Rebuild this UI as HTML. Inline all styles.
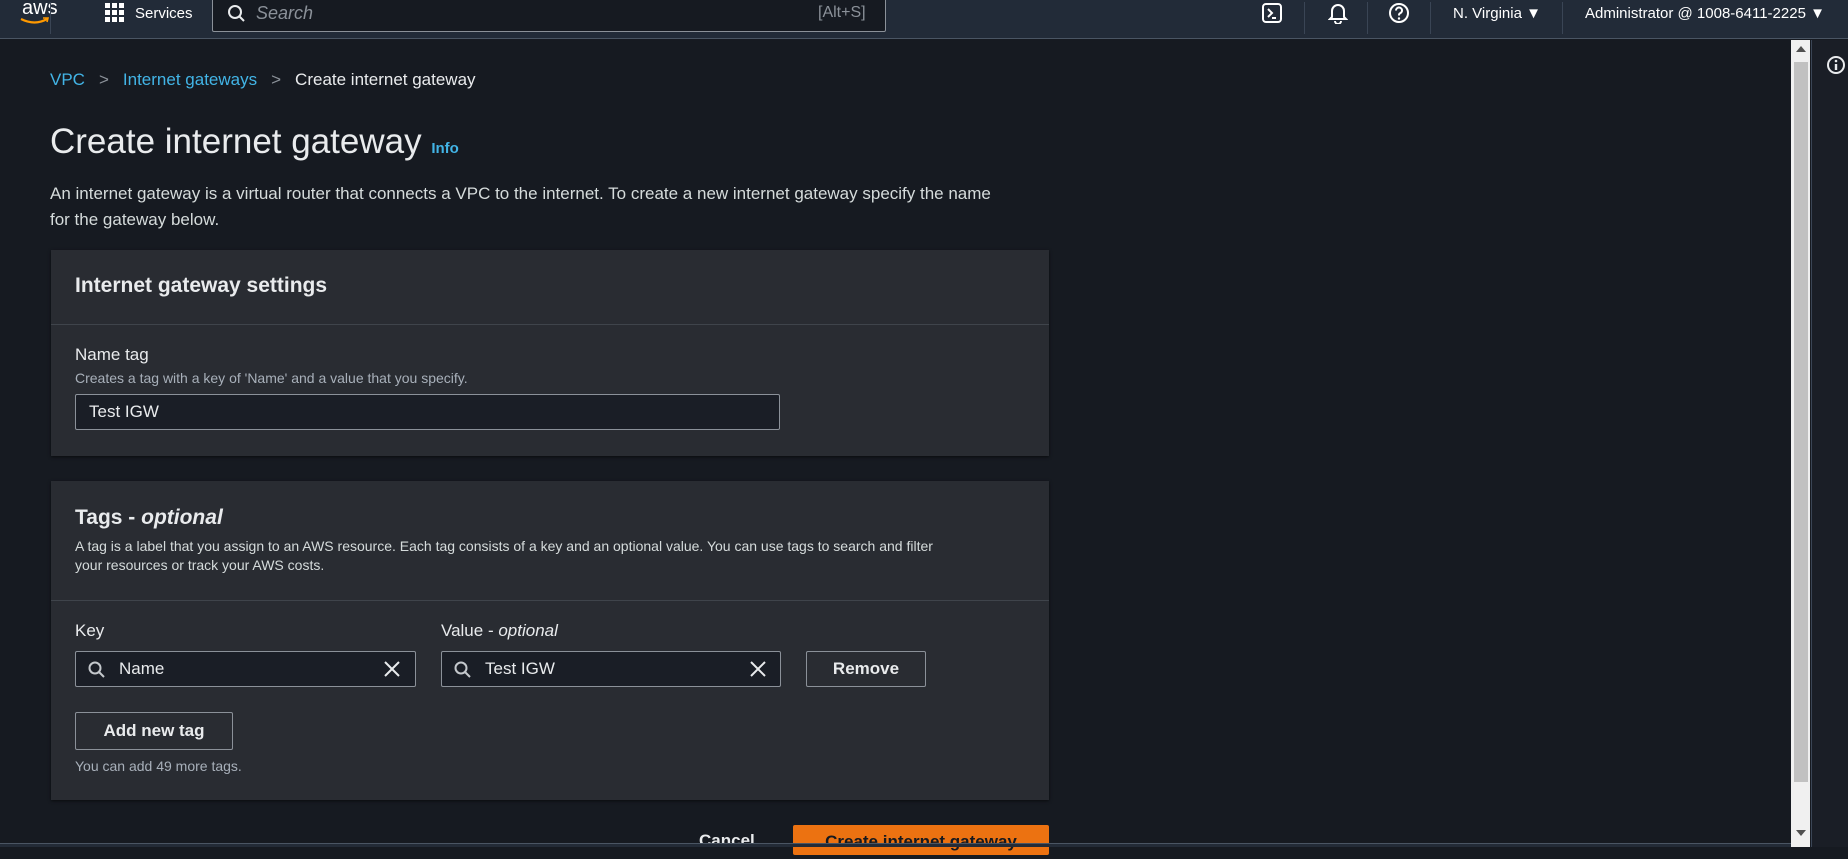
<!DOCTYPE html>
<html><head><meta charset="utf-8"><style>
*{box-sizing:border-box;margin:0;padding:0}
body{width:1848px;height:847px;overflow:hidden;background:#161a21;font-family:"Liberation Sans",sans-serif;color:#d5dbdb;position:relative}
.abs{position:absolute}
.hdr{left:0;top:0;width:1848px;height:39px;background:#222b38;border-bottom:1px solid #4a5563}
.hdr .t{color:#fff;font-size:15px;white-space:nowrap}
.sep{width:1px;height:32px;top:2px;background:#3a4555}
.panel{background:#292c32;left:51px;width:998px;box-shadow:0 1px 3px rgba(0,0,0,.6)}
.line{left:0;width:100%;height:1px;background:#3f444b}
.input{background:#1a1e26;border:1px solid #8b9199;border-radius:2px;height:36px;color:#e9ebed;font-size:17px;line-height:34px}
.btn{border:1px solid #8b9199;border-radius:2px;color:#e9ebed;font-weight:bold;font-size:17px;text-align:center}
.lbl{font-size:17px;color:#e9ebed}
.sm{font-size:14px;color:#a8b0ba}
</style></head><body>
<div class="abs hdr">
 <div class="abs t" style="left:22px;top:-3px;font-size:20px;color:#fff">aws</div>
 <svg class="abs" style="left:19px;top:17px" width="32" height="8"><path d="M2 2 Q16 9 28 2" stroke="#ff9900" stroke-width="2.2" fill="none"/><path d="M24 1 L29 1 L28 5" stroke="#ff9900" stroke-width="1.6" fill="none"/></svg>
 <div class="abs sep" style="left:50px"></div>
 <svg class="abs" style="left:105px;top:3px" width="20" height="20"><g fill="#fff"><rect x="0" y="0" width="5" height="5"/><rect x="7" y="0" width="5" height="5"/><rect x="14" y="0" width="5" height="5"/><rect x="0" y="7" width="5" height="5"/><rect x="7" y="7" width="5" height="5"/><rect x="14" y="7" width="5" height="5"/><rect x="0" y="14" width="5" height="5"/><rect x="7" y="14" width="5" height="5"/><rect x="14" y="14" width="5" height="5"/></g></svg>
 <div class="abs t" style="left:135px;top:5px">Services</div>
 <div class="abs" style="left:212px;top:-1px;width:674px;height:33px;background:#161a21;border:1px solid #8b9199;border-radius:0 0 2px 2px"></div>
 <svg class="abs" style="left:227px;top:4px" width="20" height="20"><circle cx="8" cy="8" r="6" stroke="#e9ebed" stroke-width="2" fill="none"/><path d="M12.5 12.5L17 17" stroke="#e9ebed" stroke-width="2"/></svg>
 <div class="abs" style="left:256px;top:3px;font-size:18px;font-style:italic;color:#8b9199">Search</div>
 <div class="abs" style="left:818px;top:4px;font-size:16px;color:#8b9199">[Alt+S]</div>
 <svg class="abs" style="left:1262px;top:3px" width="20" height="20"><rect x="1" y="1" width="18" height="18" rx="3" stroke="#fff" stroke-width="2" fill="none"/><path d="M6 6l4 4-4 4M10 15h4" stroke="#fff" stroke-width="2" fill="none"/></svg>
 <div class="abs sep" style="left:1304px"></div>
 <svg class="abs" style="left:1328px;top:2px" width="20" height="22"><path d="M4 15V9a6 6 0 0 1 12 0v6l2 2H2z" stroke="#fff" stroke-width="2" fill="none"/><path d="M7 19a3 3 0 0 0 6 0" stroke="#fff" stroke-width="2" fill="none"/></svg>
 <div class="abs sep" style="left:1367px"></div>
 <svg class="abs" style="left:1388px;top:2px" width="22" height="22"><circle cx="11" cy="11" r="9" stroke="#fff" stroke-width="2" fill="none"/><path d="M8 8.5a3 3 0 1 1 4 2.8c-1 .4-1 1-1 2.2" stroke="#fff" stroke-width="2" fill="none"/><circle cx="11" cy="16.5" r="1.2" fill="#fff"/></svg>
 <div class="abs sep" style="left:1430px"></div>
 <div class="abs t" style="left:1453px;top:5px">N. Virginia ▼</div>
 <div class="abs sep" style="left:1562px"></div>
 <div class="abs t" style="left:1585px;top:5px">Administrator @ 1008-6411-2225 ▼</div>
</div>
<div class="abs" style="left:1791px;top:40px;width:19px;height:807px;background:#f0f0f0"></div>
<div class="abs" style="left:1794px;top:62px;width:14px;height:720px;background:#c1c1c1"></div>
<div class="abs" style="left:1796px;top:46px;width:0;height:0;border-left:5px solid transparent;border-right:5px solid transparent;border-bottom:6px solid #505050"></div>
<div class="abs" style="left:1796px;top:830px;width:0;height:0;border-left:5px solid transparent;border-right:5px solid transparent;border-top:6px solid #505050"></div>
<div class="abs" style="left:1811px;top:40px;width:37px;height:807px;background:#1a1e26;border-left:1px solid #3a4555"></div>
<svg class="abs" style="left:1826px;top:55px" width="20" height="20"><circle cx="10" cy="10" r="8" stroke="#e9ebed" stroke-width="2" fill="none"/><circle cx="10" cy="6" r="1.3" fill="#e9ebed"/><path d="M10 9v6" stroke="#e9ebed" stroke-width="2.4"/></svg>

<div class="abs" style="left:50px;top:70px;font-size:17px;color:#e9ebed;white-space:nowrap"><span style="color:#42b4e6">VPC</span><span style="color:#8b9199;margin:0 14px">&gt;</span><span style="color:#42b4e6">Internet gateways</span><span style="color:#8b9199;margin:0 14px">&gt;</span>Create internet gateway</div>
<div class="abs" style="left:50px;top:122px;font-size:35px;color:#e9ebed">Create internet gateway <span style="font-size:15px;color:#42b4e6;font-weight:bold">Info</span></div>
<div class="abs" style="left:50px;top:181px;width:1100px;font-size:17px;line-height:26px;color:#d5dbdb;white-space:nowrap">An internet gateway is a virtual router that connects a VPC to the internet. To create a new internet gateway specify the name<br>for the gateway below.</div>

<div class="abs panel" style="top:250px;height:206px">
 <div class="abs" style="left:24px;top:24px;font-size:21px;font-weight:bold;color:#e9ebed">Internet gateway settings</div>
 <div class="abs line" style="top:74px"></div>
 <div class="abs lbl" style="left:24px;top:95px">Name tag</div>
 <div class="abs sm" style="left:24px;top:120px">Creates a tag with a key of 'Name' and a value that you specify.</div>
 <div class="abs input" style="left:24px;top:144px;width:705px;padding-left:13px">Test IGW</div>
</div>

<div class="abs panel" style="top:481px;height:319px">
 <div class="abs" style="left:24px;top:25px;font-size:21px;font-weight:bold;color:#e9ebed">Tags - <i>optional</i></div>
 <div class="abs sm" style="left:24px;top:56px;width:970px;line-height:19px;color:#d5dbdb;white-space:nowrap">A tag is a label that you assign to an AWS resource. Each tag consists of a key and an optional value. You can use tags to search and filter<br>your resources or track your AWS costs.</div>
 <div class="abs line" style="top:119px"></div>
 <div class="abs lbl" style="left:24px;top:140px">Key</div>
 <div class="abs lbl" style="left:390px;top:140px">Value - <i>optional</i></div>
 <div class="abs input" style="left:24px;top:170px;width:341px;padding-left:43px">Name</div>
 <div class="abs input" style="left:390px;top:170px;width:340px;padding-left:43px">Test IGW</div>
 <svg class="abs" style="left:37px;top:180px" width="18" height="18"><circle cx="7" cy="7" r="5.5" stroke="#c4c8cc" stroke-width="2" fill="none"/><path d="M11 11l5 5" stroke="#c4c8cc" stroke-width="2"/></svg>
 <svg class="abs" style="left:403px;top:180px" width="18" height="18"><circle cx="7" cy="7" r="5.5" stroke="#c4c8cc" stroke-width="2" fill="none"/><path d="M11 11l5 5" stroke="#c4c8cc" stroke-width="2"/></svg>
 <svg class="abs" style="left:333px;top:180px" width="16" height="16"><path d="M1 1l14 14M15 1L1 15" stroke="#e9ebed" stroke-width="2"/></svg>
 <svg class="abs" style="left:699px;top:180px" width="16" height="16"><path d="M1 1l14 14M15 1L1 15" stroke="#e9ebed" stroke-width="2"/></svg>
 <div class="abs btn" style="left:755px;top:170px;width:120px;height:36px;line-height:34px">Remove</div>
 <div class="abs btn" style="left:24px;top:231px;width:158px;height:38px;line-height:36px">Add new tag</div>
 <div class="abs sm" style="left:24px;top:277px">You can add 49 more tags.</div>
</div>

<div class="abs" style="left:699px;top:831px;font-size:17px;font-weight:bold;color:#e9ebed">Cancel</div>
<div class="abs" style="left:793px;top:825px;width:256px;height:30px;background:#ec7211;border-radius:2px;color:#16191f;font-weight:bold;font-size:17px;text-align:center;line-height:34px">Create internet gateway</div>
<div class="abs" style="left:0;top:843px;width:1791px;height:4px;background:#232b37;border-top:1px solid #4a5563"></div>
</body></html>
